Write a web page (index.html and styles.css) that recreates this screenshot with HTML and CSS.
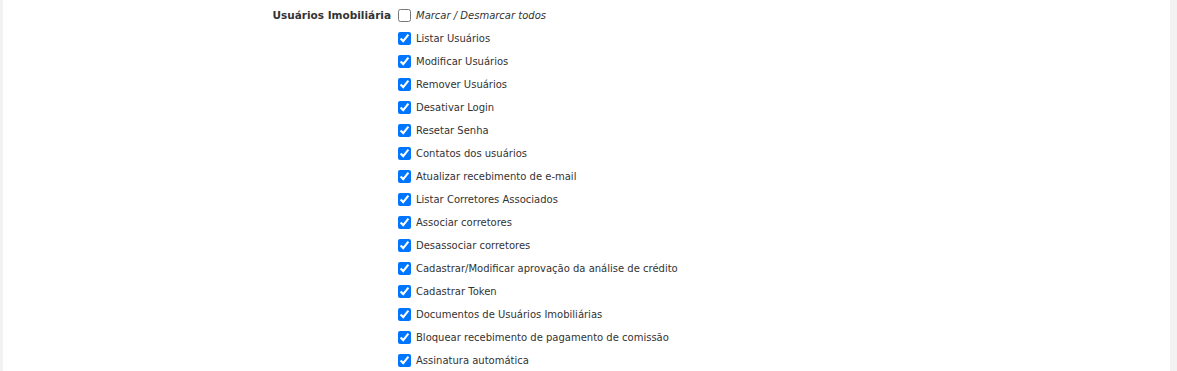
FILE: index.html
```html
<!DOCTYPE html>
<html lang="pt-br">
<head>
  <meta charset="UTF-8">
  <meta name="viewport" content="width=device-width, initial-scale=1.0">
  <link rel="stylesheet" href="styles.css">
  <title>Permissões</title>
</head>
<body>
  <div class="main">
    <div class="perm-group">
      <div class="perm-title">Usuários Imobiliária</div>
      <div class="perm-list">
        <label class="perm-item toggle-all"><input type="checkbox"> <span>Marcar / Desmarcar todos</span></label>
        <label class="perm-item"><input type="checkbox" checked> <span>Listar Usuários</span></label>
        <label class="perm-item"><input type="checkbox" checked> <span>Modificar Usuários</span></label>
        <label class="perm-item"><input type="checkbox" checked> <span>Remover Usuários</span></label>
        <label class="perm-item"><input type="checkbox" checked> <span>Desativar Login</span></label>
        <label class="perm-item"><input type="checkbox" checked> <span>Resetar Senha</span></label>
        <label class="perm-item"><input type="checkbox" checked> <span>Contatos dos usuários</span></label>
        <label class="perm-item"><input type="checkbox" checked> <span>Atualizar recebimento de e-mail</span></label>
        <label class="perm-item"><input type="checkbox" checked> <span>Listar Corretores Associados</span></label>
        <label class="perm-item"><input type="checkbox" checked> <span>Associar corretores</span></label>
        <label class="perm-item"><input type="checkbox" checked> <span>Desassociar corretores</span></label>
        <label class="perm-item"><input type="checkbox" checked> <span>Cadastrar/Modificar aprovação da análise de crédito</span></label>
        <label class="perm-item"><input type="checkbox" checked> <span>Cadastrar Token</span></label>
        <label class="perm-item"><input type="checkbox" checked> <span>Documentos de Usuários Imobiliárias</span></label>
        <label class="perm-item"><input type="checkbox" checked> <span>Bloquear recebimento de pagamento de comissão</span></label>
        <label class="perm-item"><input type="checkbox" checked> <span>Assinatura automática</span></label>
      </div>
    </div>
  </div>
</body>
</html>
```

FILE: styles.css
```css
* {
  margin: 0;
  padding: 0;
  box-sizing: border-box;
}

html, body {
  height: 100%;
}

body {
  background-color: #f2f2f2;
  font-family: "DejaVu Sans", Verdana, sans-serif;
  font-size: 10px;
  color: #333;
  overflow: hidden;
}

.main {
  margin: 0 7px 0 3px;
  min-height: 100%;
  background-color: #fff;
  padding-top: 4px;
}

.perm-group {
  display: flex;
  flex-direction: row;
}

.perm-title {
  width: 391px;
  padding-right: 3px;
  text-align: right;
  font-weight: bold;
  font-size: 10.5px;
  line-height: 23px;
}

.perm-list {
  display: flex;
  flex-direction: column;
}

.perm-item {
  display: flex;
  align-items: center;
  height: 23px;
}

.perm-item input[type=checkbox] {
  width: 13px;
  height: 13px;
  margin: 0 5px 0 4px;
  accent-color: #0075ff;
}

.toggle-all span {
  font-style: italic;
}
```
